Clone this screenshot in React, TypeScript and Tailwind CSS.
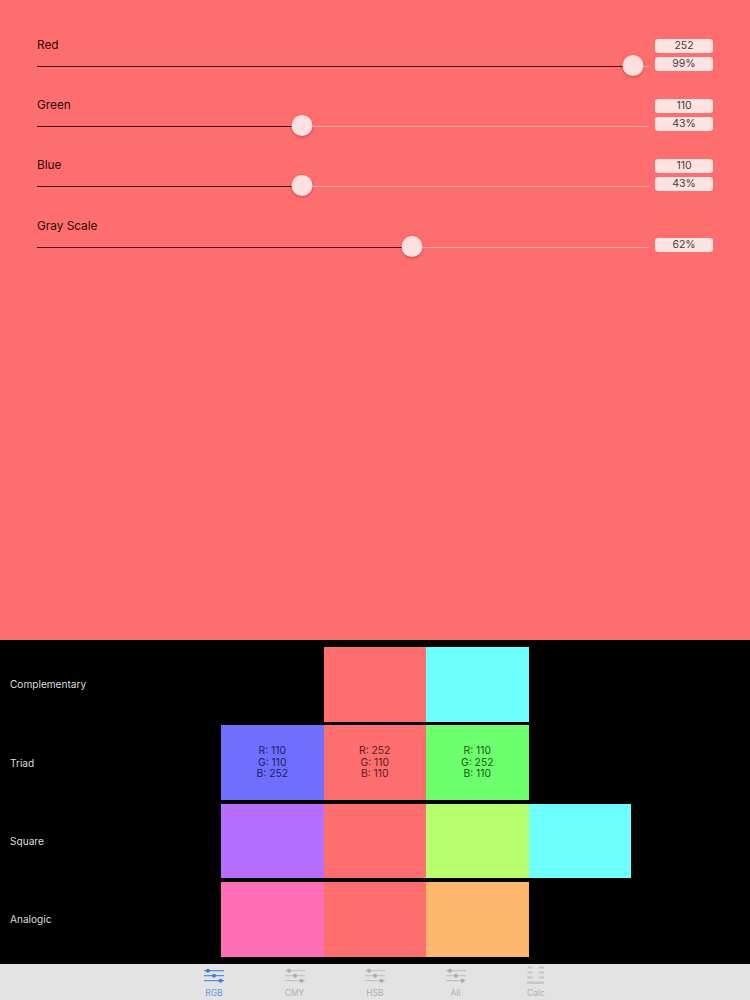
const font = { fontFamily: "Inter, 'Liberation Sans', sans-serif" };

function Slider({ label, pct, values, mt }: { label: string; pct: number; values: string[]; mt: string }) {
  return (
    <div className={`flex items-end gap-[6px] ${mt}`}>
      <div className="flex-1">
        <div className="pt-[1px] text-[11.8px] leading-[16px] text-[#2e0808]">{label}</div>
        <div className="relative mt-[2px] h-[22px]">
          <div className="absolute inset-x-0 top-[11px] h-px bg-[#ffa8a3]" />
          <div className="absolute left-0 top-[11px] h-px bg-[#4a0f12]" style={{ width: `${pct}%` }} />
          <div
            className="absolute top-0 size-[21px] -translate-x-1/2 rounded-full bg-[#fde0df] shadow-[0_1px_3px_rgba(90,0,0,0.35)]"
            style={{ left: `${pct}%` }}
          />
        </div>
      </div>
      <div className="flex w-[58px] flex-col gap-[4px] pb-[6px]">
        {values.map((v) => (
          <div key={v} className="flex h-[14px] items-center justify-center rounded-[3px] bg-[#fde3e2] text-[10.5px] text-[#4a3a3a]">
            {v}
          </div>
        ))}
      </div>
    </div>
  );
}

type Cell = { bg: string; text?: string[]; color?: string } | null;

function Row({ label, cells }: { label: string; cells: Cell[] }) {
  return (
    <div className="flex h-[74.7px] items-stretch">
      <div className="flex w-[221px] items-center pl-[10px] pt-[1px] text-[10.1px] text-[#dcdcdc]">{label}</div>
      {cells.map((c, i) =>
        c ? (
          <div
            key={i}
            className="flex w-[102.5px] flex-col items-center justify-center text-[10.3px] leading-[11.5px]"
            style={{ backgroundColor: c.bg, color: c.color }}
          >
            {c.text?.map((t) => <div key={t}>{t}</div>)}
          </div>
        ) : (
          <div key={i} className="w-[102.5px]" />
        ),
      )}
    </div>
  );
}

function SlidersIcon({ color, active }: { color: string; active?: boolean }) {
  return (
    <svg width="22" height="16" viewBox="0 0 22 16" fill="none">
      <path d="M1 2.7h20M1 7.7h20M1 12.7h20" stroke={color} strokeWidth={active ? 1.2 : 1} opacity={active ? 0.85 : 0.7} />
      <circle cx="5" cy="2.7" r="2" fill={color} />
      <circle cx="11" cy="7.7" r="2" fill={color} />
      <circle cx="17.5" cy="12.7" r="2" fill={color} />
    </svg>
  );
}

function CalcIcon() {
  const c = "#c6c6c6";
  return (
    <svg width="20" height="20" viewBox="0 0 20 20" fill="none">
      <g fill={c}>
        <rect x="1.5" y="0.5" width="5" height="2" />
        <rect x="13" y="0.5" width="5" height="2" />
        <rect x="1.5" y="5.5" width="5" height="2" />
        <rect x="13" y="5.5" width="5" height="2" />
        <rect x="1.5" y="10.5" width="5" height="2" />
        <rect x="13" y="10.5" width="5" height="2" />
        <rect x="1" y="15.5" width="17" height="2.5" />
      </g>
    </svg>
  );
}

function Tab({ label, active, calc }: { label: string; active?: boolean; calc?: boolean }) {
  return (
    <div className="flex w-[80.5px] flex-col items-center">
      <div className="flex h-[20px] items-center">
        {calc ? <CalcIcon /> : <SlidersIcon color={active ? "#3b82e0" : "#adadad"} active={active} />}
      </div>
      <div className={`mt-[1px] text-[8.5px] leading-[12px] ${active ? "text-[#5a9ae8]" : "text-[#b0b0b0]"}`}>{label}</div>
    </div>
  );
}

const R = "#fe6e6e";

export default function App() {
  return (
    <div className="flex h-[1000px] w-[750px] flex-col bg-black" style={font}>
      <div className="h-[640px] bg-[#fe6e6e] px-[37px] pt-[36px]">
        <Slider label="Red" pct={97.4} values={["252", "99%"]} mt="" />
        <Slider label="Green" pct={43.3} values={["110", "43%"]} mt="mt-[19px]" />
        <Slider label="Blue" pct={43.3} values={["110", "43%"]} mt="mt-[19px]" />
        <Slider label="Gray Scale" pct={61.3} values={["62%"]} mt="mt-[20px]" />
      </div>
      <div className="flex h-[324px] flex-col gap-[3.6px] pt-[7px]">
        <Row label="Complementary" cells={[null, { bg: R }, { bg: "#6effff" }]} />
        <Row
          label="Triad"
          cells={[
            { bg: "#6e6eff", text: ["R: 110", "G: 110", "B: 252"], color: "#20205a" },
            { bg: R, text: ["R: 252", "G: 110", "B: 110"], color: "#5a1a1a" },
            { bg: "#6eff6e", text: ["R: 110", "G: 252", "B: 110"], color: "#145a14" },
          ]}
        />
        <Row label="Square" cells={[{ bg: "#b76eff" }, { bg: R }, { bg: "#b7ff6e" }, { bg: "#6effff" }]} />
        <Row label="Analogic" cells={[{ bg: "#ff6eb7" }, { bg: R }, { bg: "#ffb76e" }]} />
      </div>
      <div className="flex h-[36px] justify-center bg-[#e3e3e3] pt-[2px]">
        <Tab label="RGB" active />
        <Tab label="CMY" />
        <Tab label="HSB" />
        <Tab label="All" />
        <Tab label="Calc" calc />
      </div>
    </div>
  );
}
